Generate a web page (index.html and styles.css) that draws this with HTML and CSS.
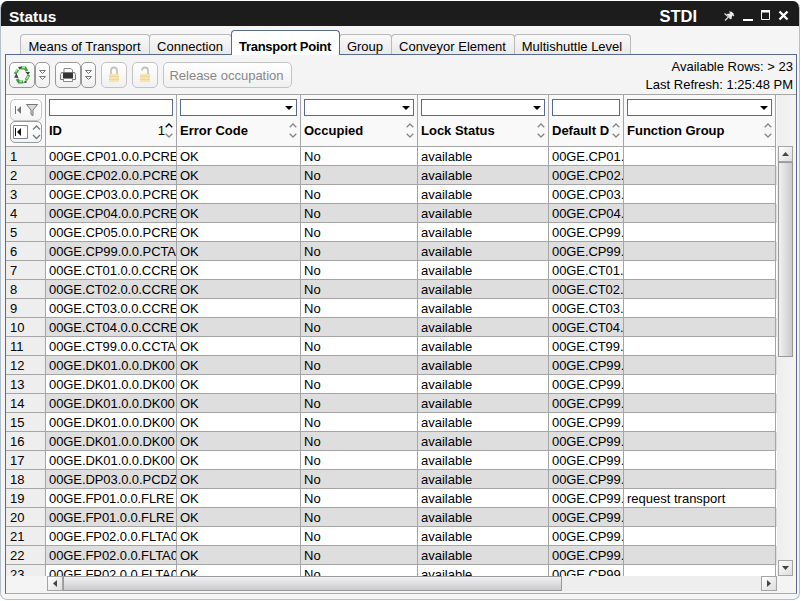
FILE: index.html
```
<!DOCTYPE html>
<html lang="en">
<head>
<meta charset="utf-8">
<title>Status</title>
<link rel="stylesheet" href="styles.css">
</head>
<body>
<div class="window">
  <header class="titlebar">
    <span class="title">Status</span>
    <span class="code">STDI</span>
    <svg class="controls" width="68" height="16" viewBox="0 0 68 16">
      <path d="M5.500 3.500L10 8M1 12.500L4 9.500M.5 5.500L7 11" stroke="#ddd" stroke-width="1.200" fill="none"/>
      <path d="M2.500 6L6 5.500l1.500-2 2.500 2.500-2 2-.5 3z" fill="#eee"/>
      <path d="M19 12h10" stroke="#fff" stroke-width="2"/>
      <path d="M37.500 4h8v7.500h-8z" stroke="#fff" fill="none"/><path d="M37 3h9" stroke="#fff" stroke-width="2"/>
      <path d="M55.500 3.500l8 8M63.500 3.500l-8 8" stroke="#fff" stroke-width="2.400"/>
    </svg>
  </header>
  <nav class="tabs">
    <div class="tab t1"><span>Means of Transport</span></div>
    <div class="tab t2"><span>Connection</span></div>
    <div class="tab t3 active"><span>Transport Point</span></div>
    <div class="tab t4"><span>Group</span></div>
    <div class="tab t5"><span>Conveyor Element</span></div>
    <div class="tab t6"><span>Multishuttle Level</span></div>
  </nav>
  <main class="panel">
    <div class="toolbar">
      <button class="btn sq"><svg width="20" height="20" viewBox="0 0 20 20"><g fill="none" stroke="#3f9f3f" stroke-width="2.800"><path d="M3 9L6 4.500"/><path d="M9 3h4l2 3"/><path d="M17 10l-3 5"/><path d="M11 17H7l-2-3"/></g><g fill="#3a4a3a"><path d="M6 2l4-.5L8 5zM13.500 7H18l-2 3zM14.500 15v3l-3.500-.5zM2 12.500l2.500-4L6.500 13z"/></g><path d="M3.500 7l2-3M10 2.500h3M16.500 11l-2 3M10 16.500H7.500" stroke="#9bf096" stroke-width="1.400"/></svg></button>
      <button class="btn drop"><svg width="9" height="12" viewBox="0 0 9 12"><path d="M1.500 1.500h6L4.500 4.500zM1.500 7.500h6L4.500 10.500z" fill="none" stroke="#777"/></svg></button>
      <button class="btn sq gap"><svg width="18" height="18" viewBox="0 0 18 18"><path d="M5 6V2.500h7L13.500 4v2" fill="#fff" stroke="#888"/><path d="M2.500 6.500h13l1 2v5h-15v-5z" fill="#eee" stroke="#777"/><path d="M4 7h10v5H4z" fill="#333"/><path d="M4.500 12.500h9v3h-9z" fill="#fff" stroke="#888"/></svg></button>
      <button class="btn drop"><svg width="9" height="12" viewBox="0 0 9 12"><path d="M1.500 1.500h6L4.500 4.500zM1.500 7.500h6L4.500 10.500z" fill="none" stroke="#777"/></svg></button>
      <button class="btn sq gap off"><svg width="14" height="18" viewBox="0 0 14 18"><path d="M4 8V4.500Q4 1.500 7 1.500t3 3V8" fill="none" stroke="#c3c3c0" stroke-width="1.800"/><path d="M2 8h10v8H2z" fill="#f8e3ad"/><path d="M2 10.500h10M2 13.500h10" stroke="#ecd6a0"/></svg></button>
      <button class="btn sq gap off"><svg width="14" height="18" viewBox="0 0 14 18"><path d="M4 4.500Q4 1.500 7 1.500t3 3V8" fill="none" stroke="#c3c3c0" stroke-width="1.800"/><path d="M2 8h10v8H2z" fill="#f8e3ad"/><path d="M2 10.500h10M2 13.500h10" stroke="#ecd6a0"/></svg></button>
      <button class="btn gap off release"><span>Release occupation</span></button>
      <div class="info"><div><span>Available Rows: &gt; 23</span></div><div><span>Last Refresh: 1:25:48 PM</span></div></div>
    </div>
    <div class="table">
      <div class="grid" id="grid">
        <div class="row head">
          <div class="corner">
            <div class="mini dim"><svg width="30" height="20" viewBox="0 0 30 20"><path d="M4.500 6v8" stroke="#777"/><path d="M10 6v8l-4-4z" fill="#777"/><path d="M15.500 4.500h11l-4.500 5.500v5.500l-2 -1V10z" fill="#d5dbdf" stroke="#777"/></svg></div>
            <div class="mini"><svg width="30" height="20" viewBox="0 0 30 20"><path d="M2.500 3.500h14v13h-14z" fill="#fff" stroke="#7b889c"/><path d="M4.500 6v8" stroke="#111"/><path d="M10 6v8l-4-4z" fill="#111"/><path d="M22 7.500l3.500-3.500 3.500 3.500M22 13l3.500 3.500 3.500-3.500" fill="none" stroke="#6d7b80" stroke-width="1.300"/></svg></div>
          </div>
        </div>
      </div>
      <div class="vbar">
        <div class="sb"><svg width="7" height="4"><path d="M0 4h7L3.500 0z"/></svg></div>
        <div class="vthumb"></div>
        <div class="sb end"><svg width="7" height="4"><path d="M0 0h7L3.500 4z"/></svg></div>
      </div>
      <div class="hbar">
        <div class="sb"><svg width="4" height="7"><path d="M4 0v7L0 3.500z"/></svg></div>
        <div class="hthumb"></div>
        <div class="sb end"><svg width="4" height="7"><path d="M0 0v7l4-3.500z"/></svg></div>
      </div>
    </div>
  </main>
</div>
<script src="table.js"></script>
</body>
</html>
```
FILE: styles.css
```
* { box-sizing: border-box; }
body { margin: 0; width: 801px; height: 601px; overflow: hidden; background: #fff; font: 13px/18px "Liberation Sans", Arial, sans-serif; color: #000; }
.window { margin-top: 1px; width: 800px; height: 599px; border: 1px solid #b3bfc9; border-top: 0; border-radius: 7px; background: #f5f5f5; overflow: hidden; }
.titlebar { height: 25px; margin: 0 -1px; background: #1c1c1c; color: #fff; display: flex; font-weight: bold; font-size: 15.5px; line-height: 31px; padding: 0 8px 0 9px; }
.code { margin-left: auto; margin-right: 27px; font-size: 16.5px; }
.controls { margin-top: 7px; }
.tabs { height: 28px; display: flex; align-items: flex-end; padding-left: 19px; }
.tab { height: 20px; border: 1px solid #b9b9b9; border-bottom: 0; border-radius: 4px 4px 0 0; background: linear-gradient(#f9f9f9, #e9e9e9); padding: 3px 1px 0 0; display: flex; justify-content: center; white-space: nowrap; margin-right: -1px; }
.t1 { width: 130px; } .t2 { width: 83px; } .t3 { width: 109px; } .t4 { width: 53px; } .t5 { width: 124px; } .t6 { width: 117px; }
.tab.active { height: 25px; margin-bottom: -1px; padding-top: 7px; border-color: #5a6a8c; background: #fff; font-weight: bold; letter-spacing: -0.27px; position: relative; z-index: 1; }
.panel { margin-left: 4px; width: 792px; height: 540px; border: 1px solid #5a6a8c; border-bottom-color: #a9a9a9; background: #f4f4f4; }
.toolbar { height: 39px; padding: 7px 3px 0; display: flex; }
.btn { height: 26px; padding: 0; border: 1px solid #999; border-radius: 5px; background: linear-gradient(#fff, #f0f0f0); display: flex; align-items: center; justify-content: center; font: inherit; }
.sq { width: 26px; } .drop { width: 15px; }
.gap { margin-left: 5px; }
.off { border-color: #c3c3c3; color: #888; }
.release { width: 129px; padding: 1px 2px 0 0; }
.info { margin-left: auto; text-align: right; margin-top: -4px; }
.table { display: grid; grid-template-columns: 771px 19px; grid-template-rows: 481px 17px; border-top: 1px solid #a5a5a5; }
.grid { overflow: hidden; grid-column: 1; grid-row: 1; background: #f9f9f9; }
.row { display: grid; grid-template-columns: 40px 131px 124px 117px 131px 75px 152px; height: 19px; background: #fff; }
.row > div { border-right: 1px solid #a5a5a5; border-bottom: 1px solid #a5a5a5; padding: 1px 0 0 3px; overflow: hidden; white-space: nowrap; }
.row > .num { background: #eee; padding-left: 4px; }
.row > .id { letter-spacing: -0.08px; }
.row.even { background: #dedede; }
.row.head { height: 52px; background: #f9f9f9; }
.row.head > .corner { padding: 4px 0 0 4px; }
.mini { width: 32px; height: 22px; border: 1px solid #999; border-radius: 5px; background: linear-gradient(#fff, #f4f4f4); }
.mini.dim { border-color: #c6c6c6; }
.mini svg { display: block; }
.row > .col { padding-top: 4px; display: grid; grid-template-rows: 17px 1fr; }
.field { height: 17px; margin-right: 3px; border: 1px solid #5a6a8c; background: #fff; display: flex; justify-content: flex-end; align-items: center; padding-right: 3px; }
.label { display: flex; align-items: flex-start; font-weight: bold; padding-top: 6px; height: 30px; }
.order { margin-left: auto; font-weight: normal; }
.sort { margin: 1px 3px 0 auto; flex: none; }
.order + .sort { margin-left: 0; }
.vbar { padding: 51px 0 0 1px; display: flex; flex-direction: column; grid-column: 2; grid-row: 1; background: linear-gradient(to right, #eee, #f4f4f4); }
.hbar { display: flex; padding: 0 0 0 41px; height: 15px; grid-column: 1; grid-row: 2; background: linear-gradient(to right, #f4f4f4 41px, #eee 41px); }
.sb { width: 16px; height: 15px; flex: none; border: 1px solid #a5a5a5; background: linear-gradient(135deg, #fff, #ddd); display: flex; align-items: center; justify-content: center; fill: #444; }
.sb.end { margin-left: auto; }
.vbar .sb { width: 15px; height: 16px; margin-left: 0; }
.vbar .sb.end { margin-top: auto; }
.vthumb { width: 15px; height: 195px; border: 1px solid #999; background: linear-gradient(to right, #f1f1f2, #cacace); }
.hthumb { width: 499px; height: 15px; border: 1px solid #999; background: linear-gradient(#f1f1f2, #cacace); }
```
FILE: table.js
```
const grid = document.getElementById("grid");
const head = grid.querySelector(".head");
const columns = [["ID", 0], ["Error Code", 1], ["Occupied", 1], ["Lock Status", 1], ["Default D", 0], ["Function Group", 1]];
for (const [name, select] of columns) {
  const cell = document.createElement("div");
  cell.className = "col";
  const up = name === "ID" ? "#000" : "#888";
  const arrow = select ? '<svg width="8" height="4"><path d="M0 0h8L4 4z"/></svg>' : "";
  const order = name === "ID" ? '<span class="order">1</span>' : "";
  cell.innerHTML = `<div class="field">${arrow}</div><div class="label"><span>${name}</span>${order}<svg class="sort" width="8" height="15" viewBox="0 0 8 15"><path d="M.700 4.300L4 1l3.300 3.300" fill="none" stroke="${up}" stroke-width="1.300"/><path d="M.700 10.700L4 14l3.300-3.300" fill="none" stroke="#888" stroke-width="1.300"/></svg></div>`;
  head.append(cell);
}
const ids = ["CP01.0.0.PCRE", "CP02.0.0.PCRE", "CP03.0.0.PCRE", "CP04.0.0.PCRE", "CP05.0.0.PCRE", "CP99.0.0.PCTA", "CT01.0.0.CCRE", "CT02.0.0.CCRE", "CT03.0.0.CCRE", "CT04.0.0.CCRE", "CT99.0.0.CCTA", "DK01.0.0.DK00", "DK01.0.0.DK00", "DK01.0.0.DK00", "DK01.0.0.DK00", "DK01.0.0.DK00", "DK01.0.0.DK00", "DP03.0.0.PCDZ", "FP01.0.0.FLRE", "FP01.0.0.FLRE", "FP02.0.0.FLTA0", "FP02.0.0.FLTA0", "FP02.0.0.FLTA0"];
const targets = ["CP01", "CP02", "CP03", "CP04", "CP99", "CP99", "CT01", "CT02", "CT03", "CT04", "CT99"];
ids.forEach((id, i) => {
  const row = document.createElement("div");
  row.className = i % 2 ? "row even" : "row";
  const values = [i + 1, "00GE." + id, "OK", "No", "available", "00GE." + (targets[i] || "CP99") + ".", i === 18 ? "request transport" : ""];
  values.forEach((value, c) => {
    const cell = document.createElement("div");
    if (c === 0) cell.className = "num";
    if (c === 1 || c === 5) cell.className = "id";
    cell.innerHTML = `<span>${value}</span>`;
    row.append(cell);
  });
  grid.append(row);
});
```
